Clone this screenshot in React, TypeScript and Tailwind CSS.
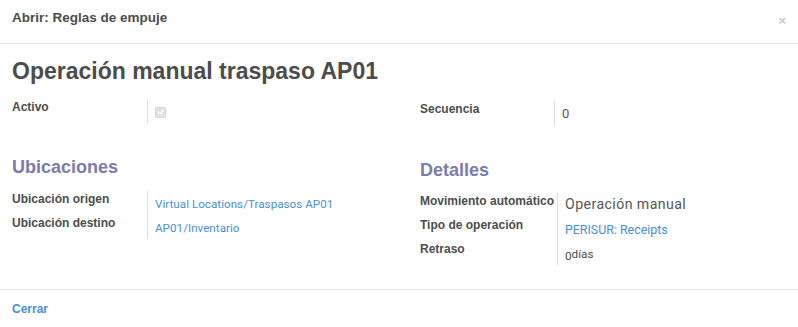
import React from 'react';

const label = "font-['Liberation_Sans',Arial,sans-serif] text-[12px] font-bold text-[#4c4c4c]";
const value = "font-['Roboto',Arial,sans-serif] text-[11.7px] text-[#4c4c4c]";
const bigValue = "font-['Roboto',Arial,sans-serif] text-[14.2px] tracking-[0.4px] leading-[16px] text-[#555555]";
const link = "font-['Roboto',Arial,sans-serif] text-[11.7px] text-[#4a8fd6]";

interface Row {
  name: string;
  content: React.ReactNode;
}

function FieldGroup({ rows, labelWidth }: { rows: Row[]; labelWidth: string }) {
  return (
    <div className={`grid ${labelWidth}`}>
      {rows.map((r) => (
        <React.Fragment key={r.name}>
          <div className={`${label} h-6 leading-[16px]`}>{r.name}</div>
          <div className="h-6 border-l border-[#dcdcdc] pl-[7px] pt-[3px] leading-[16px]">{r.content}</div>
        </React.Fragment>
      ))}
    </div>
  );
}

function Checkbox() {
  return (
    <span className="mt-[1px] inline-flex h-[11px] w-[11px] items-center justify-center rounded-[2px] border border-[#d4d4d4] bg-[#e2e2e2]">
      <svg viewBox="0 0 10 10" className="h-[8px] w-[8px]">
        <path d="M2 5.2 L4.2 7.3 L8 2.8" fill="none" stroke="#ffffff" strokeWidth="1.6" strokeLinecap="round" strokeLinejoin="round" />
      </svg>
    </span>
  );
}

function SectionTitle({ children }: { children: React.ReactNode }) {
  return (
    <h2 className="font-['Liberation_Sans',Arial,sans-serif] text-[18px] font-bold leading-[22px] text-[#7c7bad]">
      {children}
    </h2>
  );
}

export default function App() {
  return (
    <div className="min-h-[327px] w-[798px] bg-white">
      {/* header */}
      <div className="flex h-[44px] items-start justify-between border-b border-[#e5e5e5] px-3 pt-[9px]">
        <h4 className="font-['Liberation_Sans',Arial,sans-serif] text-[13.5px] font-bold leading-[18px] text-[#4c4c4c]">
          Abrir: Reglas de empuje
        </h4>
        <span className="mt-[5px] font-['Liberation_Sans',Arial,sans-serif] text-[13px] font-bold leading-[13px] text-[#c8c8c8]">
          ×
        </span>
      </div>

      {/* body */}
      <div className="h-[245px] px-3 pt-[13px]">
        <h1 className="font-['Liberation_Sans',Arial,sans-serif] text-[23px] font-bold leading-[28px] text-[#4c4c4c]">
          Operación manual traspaso AP01
        </h1>

        <div className="grid grid-cols-[408px_1fr]">
          {/* left column */}
          <div className="pt-[13px]">
            <div className="pt-[1px]">
              <FieldGroup
                labelWidth="grid-cols-[135px_1fr]"
                rows={[{ name: 'Activo', content: <Checkbox /> }]}
              />
            </div>
            <div className="mt-[33px]">
              <SectionTitle>Ubicaciones</SectionTitle>
            </div>
            <div className="mt-[13px]">
              <FieldGroup
                labelWidth="grid-cols-[135px_1fr]"
                rows={[
                  { name: 'Ubicación origen', content: <span className={link}>Virtual Locations/Traspasos AP01</span> },
                  { name: 'Ubicación destino', content: <span className={link}>AP01/Inventario</span> },
                ]}
              />
            </div>
          </div>

          {/* right column */}
          <div className="pt-[16px]">
            <FieldGroup
              labelWidth="grid-cols-[134px_1fr]"
              rows={[{ name: 'Secuencia', content: <span className="font-['Roboto',Arial,sans-serif] text-[13px] text-[#555555]">0</span> }]}
            />
            <div className="mt-[34px]">
              <SectionTitle>Detalles</SectionTitle>
            </div>
            <div className="mt-[12px]">
              <FieldGroup
                labelWidth="grid-cols-[137px_1fr]"
                rows={[
                  { name: 'Movimiento automático', content: <span className={`block ${bigValue}`}>Operación manual</span> },
                  { name: 'Tipo de operación', content: <span className={`${link} text-[12.4px]`}>PERISUR: Receipts</span> },
                  {
                    name: 'Retraso',
                    content: (
                      <span className={value}>
                        <span className="relative top-[2px]">0</span>días
                      </span>
                    ),
                  },
                ]}
              />
            </div>
          </div>
        </div>
      </div>

      {/* footer */}
      <div className="border-t border-[#e5e5e5] px-3 pt-[11px]">
        <button className="block font-['Liberation_Sans',Arial,sans-serif] text-[12px] font-bold leading-[16px] text-[#4a8fd6]">
          Cerrar
        </button>
      </div>
    </div>
  );
}
